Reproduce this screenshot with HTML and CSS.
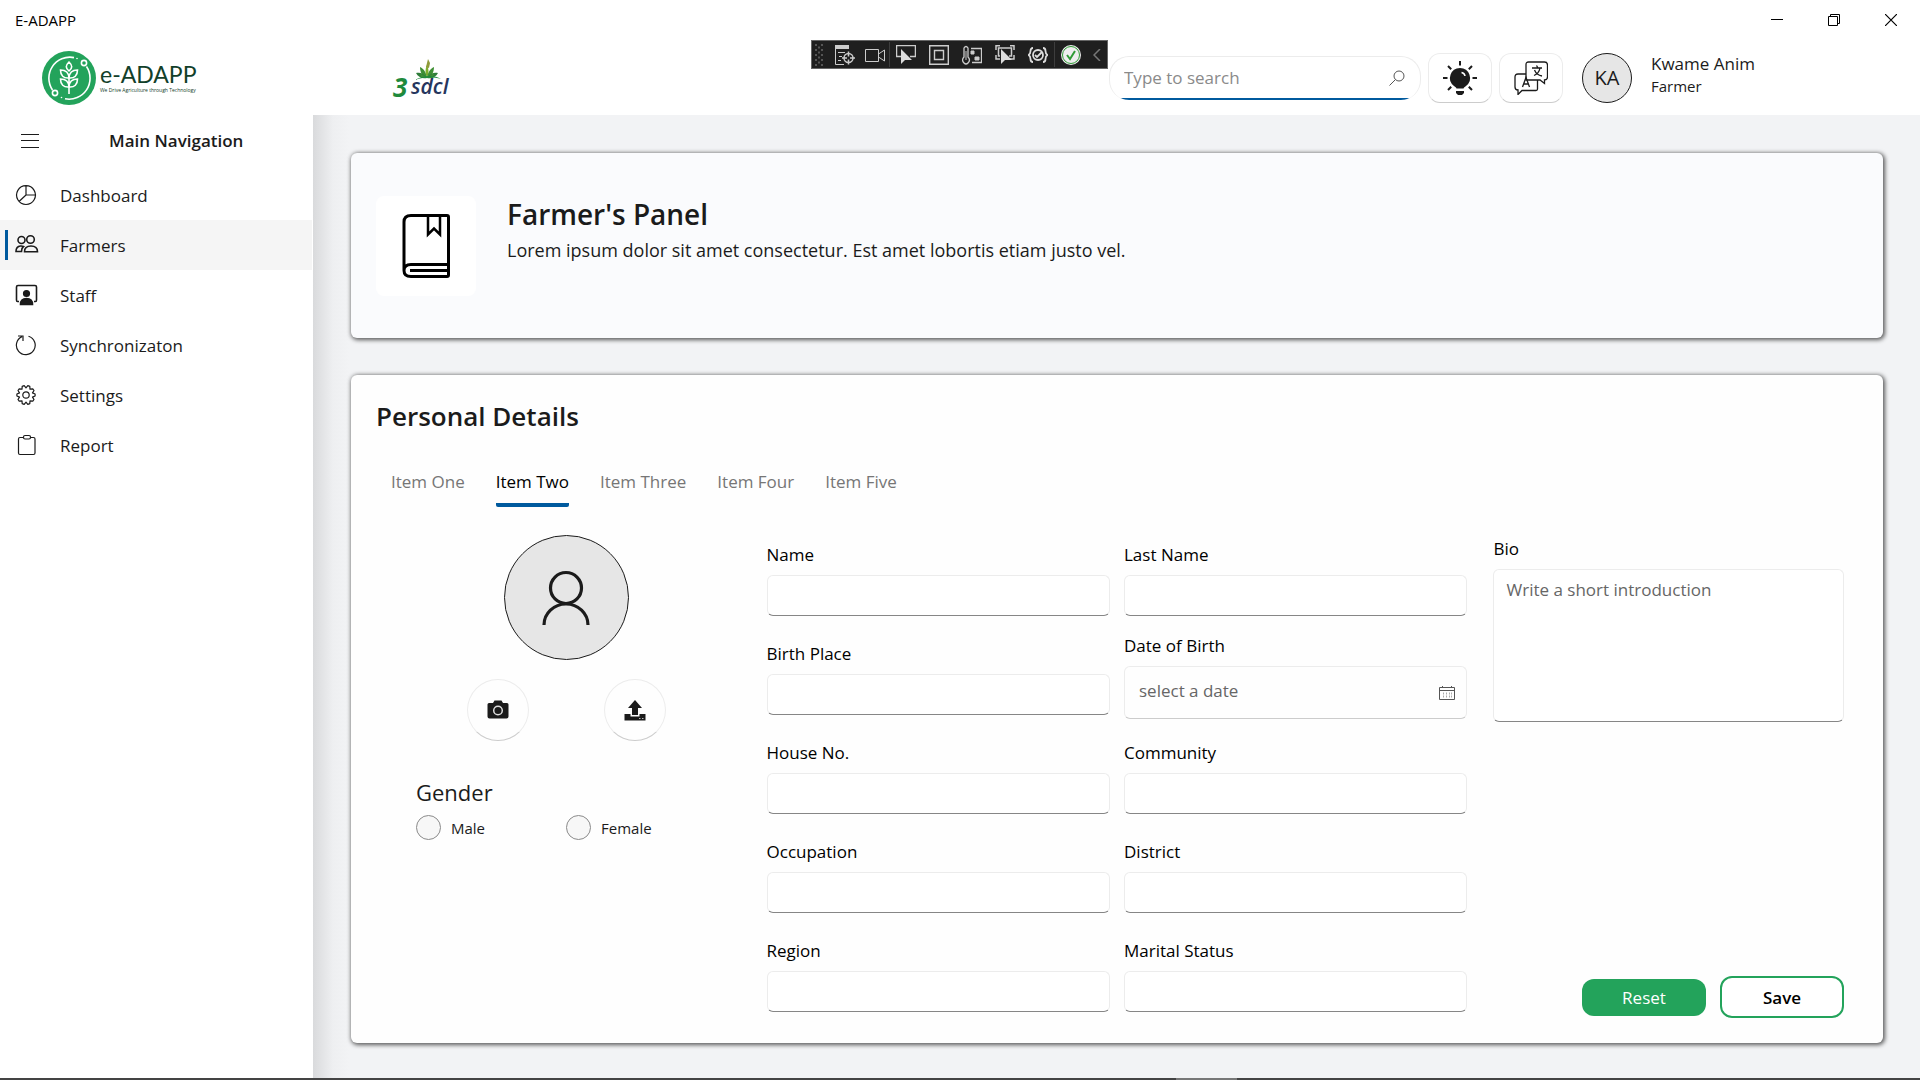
FILE: index.html
```html
<!DOCTYPE html>
<html lang="en">
<head>
<meta charset="utf-8">
<meta name="viewport" content="width=device-width, initial-scale=1">
<title>E-ADAPP</title>
<link rel="stylesheet" href="styles.css">
</head>
<body>
<div class="window">
  <div class="titlebar">
    <span class="titlebar-name">E-ADAPP</span>
    <div class="window-controls">
      <button type="button" class="window-button" aria-label="Minimize"><svg width="12" height="12" viewBox="0 0 12 12"><path d="M0 5.5h12" stroke="#000"/></svg></button>
      <button type="button" class="window-button" aria-label="Restore"><svg width="12" height="12" viewBox="0 0 12 12" fill="none" stroke="#000"><path d="M.5 2.5h9v9h-9zM2.5 2.500V.5h9v9h-2"/></svg></button>
      <button type="button" class="window-button" aria-label="Close"><svg width="12" height="12" viewBox="0 0 12 12"><path d="M0 0l12 12M12 0L0 12" stroke="#000" stroke-width="1.2"/></svg></button>
    </div>
  </div>

  <header class="header">
    <a class="brand" href="#">
      <svg width="54" height="54" viewBox="0 0 54 54" fill="none" stroke="#fff" stroke-width="1.600">
        <circle cx="27" cy="27" r="27" fill="#23a35b" stroke="none"/>
        <path d="M32 6.600A21 21 0 0 0 10.500 39M44.500 15.500A21 21 0 0 1 23 47.800"/>
        <circle cx="42" cy="12" r="2.600"/><circle cx="13" cy="42" r="2.600"/>
        <circle cx="35" cy="7.500" r=".8" fill="#fff" stroke="none"/><circle cx="19.500" cy="46.500" r=".8" fill="#fff" stroke="none"/>
        <path d="M27 43V24M27 20c-3.600-3-3.600-5.500 0-9 3.600 3.500 3.600 6 0 9zM27 27c-.2-5-3.500-8-8.500-8 0 5.500 3 8.500 8.500 8zM27 27c.2-5 3.500-8 8.500-8 0 5.500-3 8.500-8.500 8zM27 36c-.2-5-3.500-8-8.500-8 0 5.500 3 8.500 8.500 8zM27 36c.2-5 3.500-8 8.500-8 0 5.500-3 8.500-8.500 8z"/>
      </svg>
      <span class="brand-text">
        <span class="brand-name">e-ADAPP</span>
        <span class="brand-tagline">We Drive Agriculture through Technology</span>
      </span>
    </a>
    <a class="partner" href="#" aria-label="3sdcl">
      <svg width="72" height="60" viewBox="-6 -8 72 60">
        <g transform="translate(-2 2)">
          <path d="M37 20c-2-5-2-9 0-13 2 4 2 8 0 13z" fill="#7fae2e"/>
          <path d="M37 20c-5-2-7-6-7-11 4 2 6 5 7 11zM37 20c5-2 7-6 7-11-4 2-6 5-7 11z" fill="#3f8f35"/>
          <path d="M37 20c-5 1-9-1-11-5 5-1 8 1 11 5zM37 20c5 1 9-1 11-5-5-1-8 1-11 5z" fill="#2f7d3a"/>
          <path d="M36 9l2-8 2 4-1 5z" fill="#8f9a3a"/>
          <path d="M30 15l7 5 7-5-1 5H31z" fill="#3f8f35"/>
        </g>
        <path d="M23 24c8-5 20-5 26-1-8-2-17-2-26 1z" fill="#1f8a3c"/>
        <text x="1" y="41" class="logo-three">3</text>
        <text x="19" y="38" class="logo-sdcl">sdcl</text>
      </svg>
    </a>

    <div class="header-tools">
      <label class="search">
        <input type="search" placeholder="Type to search" aria-label="Search">
        <svg width="16" height="16" viewBox="0 0 16 16" fill="none" stroke="#555"><circle cx="10" cy="6" r="5"/><path d="M6.500 9.500L.5 15.500"/></svg>
      </label>
      <button type="button" class="tile-button" aria-label="Theme">
        <svg width="34" height="34" viewBox="0 0 34 34" fill="#1b1b1b">
          <path d="M17 7a10 10 0 0 0-6 18c1.500 1 2 1.500 2.500 2.500h7c.5-1 1-1.500 2.500-2.500A10 10 0 0 0 17 7zM13 30h8v2l-2 2h-4l-2-2z"/>
          <path d="M17 0v4.500M0 17h4.500M29.500 17H34M5 5l3.200 3.200M29 5l-3.200 3.200M5 29l3.200-3.200M29 29l-3.200-3.200" stroke="#1b1b1b" stroke-width="2"/>
          <path d="M18.500 11.500q3 .5 3.500 3.500" fill="none" stroke="#fff" stroke-width="1.500"/>
        </svg>
      </button>
      <button type="button" class="tile-button" aria-label="Language">
        <svg width="34" height="34" viewBox="0 0 34 34" fill="none" stroke="#1b1b1b" stroke-width="1.300">
          <path d="M14.500 1h16q3 0 3 3v12q0 3-3 3v3.500L26 19H12V3.500Q12 1 14.500 1z"/>
          <path d="M12 13H4q-3 0-3 3v10q0 3 3 3v4.500L8 29.500h14q1.500 0 1.500-1.500v-9"/>
          <path d="M18 7h10M22.500 4.500L24 7M20 14.500q5-2 6-7.500M20.500 9q2 5 7.500 6"/>
          <path d="M8.500 26l3.500-9.500 3.500 9.500M9.700 23h4.600"/>
        </svg>
      </button>
      <div class="user">
        <span class="user-initials">KA</span>
        <div class="user-text">
          <div class="user-name">Kwame Anim</div>
          <div class="user-role">Farmer</div>
        </div>
      </div>
    </div>
  </header>

  <div class="body">
    <nav class="sidebar" aria-label="Main Navigation">
      <div class="sidebar-head">
        <button type="button" class="menu-button" aria-label="Toggle menu"><svg width="18" height="14" viewBox="0 0 18 14"><path d="M0 .5h18M0 6.500h18M0 13.500h18" stroke="#1b1b1b"/></svg></button>
        <h2 class="sidebar-title">Main Navigation</h2>
      </div>
      <a class="nav-item" href="#"><svg class="nav-icon" viewBox="0 0 24 24"><path d="M11 1.700a9.400 9.400 0 1 0 .01 0zM11 2v9h9.500M11 11l-7 6.500"/></svg>Dashboard</a>
      <a class="nav-item active" href="#" aria-current="page"><svg class="nav-icon strong" viewBox="0 0 24 24"><circle cx="6.500" cy="6" r="3.500"/><circle cx="15.500" cy="5.500" r="3.800"/><path d="M9.500 17.700q0-5.700 6.500-5.700t6.500 5.700zM6.500 17.500H1q0-5 4.500-5.500 1.500-.2 3 .5Q6.500 14 6.500 17.500z"/></svg>Farmers</a>
      <a class="nav-item" href="#"><svg class="nav-icon strong" viewBox="0 0 24 24"><path d="M4 17.500H2.500Q1.500 17.500 1.500 16V3Q1.500 1.500 3 1.500h17q1.500 0 1.500 1.500v13q0 1.500-1 1.500H19"/><circle cx="11.500" cy="9.500" r="2.800" fill="#1b1b1b"/><path d="M5.500 20.500q0-6 6-6t6 6z" fill="#1b1b1b"/></svg>Staff</a>
      <a class="nav-item" href="#"><svg class="nav-icon" viewBox="0 0 24 24"><path d="M13.500 2.200A9.400 9.400 0 1 1 7 2.600M3 2h5v5"/></svg>Synchronizaton</a>
      <a class="nav-item" href="#"><svg class="nav-icon" viewBox="0 0 24 24"><circle cx="11" cy="11" r="3.200"/><path d="M9.200 1.600L11 3.800l1.800-2.200 2 .8.200 2.800 2.800-.3 1.200 1.600-1.500 2.400 2.600 1.100v2l-2.600 1.100 1.500 2.400-1.200 1.600-2.800-.3-.2 2.800-2 .8L11 18.200l-1.800 2.200-2-.8-.2-2.800-2.800.3L3 15.500l1.500-2.400L1.900 12v-2l2.600-1.100L3 6.500l1.200-1.600 2.800.3.200-2.800z" stroke-linejoin="round"/></svg>Settings</a>
      <a class="nav-item" href="#"><svg class="nav-icon" viewBox="0 0 24 24"><path d="M8 3.500H5q-1.500 0-1.500 1.500v14q0 1.500 1.500 1.500h13.500q1.500 0 1.500-1.500V5q0-1.500-1.500-1.500h-3"/><rect x="8.500" y="1.500" width="7" height="3.500" rx="1.500"/></svg>Report</a>
    </nav>

    <main class="content">
      <section class="card banner">
        <div class="banner-tile">
          <svg width="48" height="64" viewBox="0 0 48 64" fill="none" stroke="#000" stroke-width="3">
            <path d="M2 56V8q0-6.500 7-6.500h36q1.500 0 1.500 1.500v47.500H9q-7 0-7 6t7 6h36q1.500 0 1.500-1.500V51M8 56.500h38"/>
            <path d="M26 2v18.500l6-6 6 6V2" stroke-width="2.500"/>
          </svg>
        </div>
        <div class="banner-text">
          <h1 class="heading heading-large">Farmer's Panel</h1>
          <p class="banner-lead">Lorem ipsum dolor sit amet consectetur. Est amet lobortis etiam justo vel.</p>
        </div>
      </section>

      <section class="card details">
        <h2 class="heading">Personal Details</h2>
        <div class="tabs" role="tablist">
          <button type="button" class="tab" role="tab">Item One</button>
          <button type="button" class="tab selected" role="tab" aria-selected="true">Item Two</button>
          <button type="button" class="tab" role="tab">Item Three</button>
          <button type="button" class="tab" role="tab">Item Four</button>
          <button type="button" class="tab" role="tab">Item Five</button>
        </div>
        <form class="form">
          <div class="profile">
            <div class="photo">
              <svg width="50" height="56" viewBox="0 0 50 56" fill="none" stroke="#1b1b1b" stroke-width="3.200"><circle cx="25" cy="18" r="15.500"/><path d="M3 55a22 21 0 0 1 44 0"/></svg>
            </div>
            <div class="photo-actions">
              <button type="button" class="round-button" aria-label="Take photo">
                <svg width="22" height="20" viewBox="0 0 22 20"><path d="M2 3h4l1.500-2.500h7L16 3h4q1.500 0 1.500 1.500v12q0 2-2 2h-17q-2 0-2-2v-12Q.5 3 2 3z" fill="#1b1b1b"/><circle cx="11" cy="10.500" r="4.300" fill="none" stroke="#ddd" stroke-width="1.500"/></svg>
              </button>
              <button type="button" class="round-button" aria-label="Upload photo">
                <svg width="22" height="22" viewBox="0 0 22 22" fill="#1b1b1b"><path d="M11 1l7 8h-4v7H8V9H4zM.5 15H6.500v2.500h9V15h6v6.500H.5z"/><path d="M15 19.500h1.500M18 19.500h1.500" stroke="#bbb"/></svg>
              </button>
            </div>
            <fieldset class="gender">
              <legend>Gender</legend>
              <div class="gender-options">
                <label class="radio"><input type="radio" name="gender">Male</label>
                <label class="radio"><input type="radio" name="gender">Female</label>
              </div>
            </fieldset>
          </div>

          <div class="fields">
            <label class="field">Name<input type="text"></label>
            <label class="field">Last Name<input type="text"></label>
            <label class="field">Birth Place<input type="text"></label>
            <label class="field date-field">Date of Birth
              <span class="date-box">
                <input type="text" placeholder="select a date">
                <svg width="16" height="14" viewBox="0 0 16 14" fill="none" stroke="#555"><path d="M.5 1.500h15v12H.5zM.5 4.500h15M3.500 0v2M12.500 0v2"/><path d="M4.500 6.500v6M7.500 6.500v6M10.500 6.500v6M12.500 6.500v6" stroke="#aaa" stroke-dasharray="2 1"/></svg>
              </span>
            </label>
            <label class="field">House No.<input type="text"></label>
            <label class="field">Community<input type="text"></label>
            <label class="field">Occupation<input type="text"></label>
            <label class="field">District<input type="text"></label>
            <label class="field">Region<input type="text"></label>
            <label class="field">Marital Status<input type="text"></label>
          </div>

          <div class="aside">
            <label class="field">Bio<textarea placeholder="Write a short introduction"></textarea></label>
            <div class="actions">
              <button type="reset" class="button button-reset">Reset</button>
              <button type="submit" class="button button-save">Save</button>
            </div>
          </div>
        </form>
      </section>
    </main>
  </div>
  <footer class="taskbar"><span class="taskbar-active"></span></footer>

  <div class="debug-bar">
    <svg class="grip" width="9" height="22" viewBox="0 0 9 22" stroke="#555" stroke-width="2" stroke-dasharray="2 3"><path d="M1 0v22M7 0v22"/><path d="M4 2.500v19"/></svg>
    <button type="button" class="tool" aria-label="Live visual tree"><svg width="20" height="20" viewBox="0 0 20 20" fill="none" stroke="#ccc"><path d="M0 2h14" stroke-width="4"/><path d="M.5 4v15.500H9M3 7.500h7M4 11.500h3M3 15.500h3"/><circle cx="13.500" cy="13" r="4.500" stroke-width="1.500"/><path d="M13.500 6.500v5M13.500 14.500v5M7 13h5M15 13h5" stroke-width="1.500"/></svg></button>
    <button type="button" class="tool narrow" aria-label="Record"><svg width="20" height="20" viewBox="0 0 20 20" fill="none" stroke="#ccc"><path d="M.5 4.500h13v12H.5zM13.500 9l6-4v11l-6-4"/></svg></button>
    <button type="button" class="tool divided" aria-label="Select element"><svg width="20" height="20" viewBox="0 0 20 20" fill="none" stroke="#ccc"><path d="M5 11.500H.5v-11h19v11H14" stroke-width="1.500"/><path d="M5 4v15l4-4h7z" fill="#ddd" stroke="none"/></svg></button>
    <button type="button" class="tool" aria-label="Display layout"><svg width="20" height="20" viewBox="0 0 20 20" fill="none" stroke="#ccc" stroke-width="1.400"><path d="M.7.700h18.600v18.600H.7zM5.500 5.500h9v9h-9z"/></svg></button>
    <button type="button" class="tool" aria-label="Hot reload"><svg width="20" height="20" viewBox="0 0 20 20" fill="none" stroke="#ccc"><path d="M9 3.500h10.500v14H10M2 3q2-3 4 0v9q3 3 0 6-2 2-4 0-3-3 0-6z" stroke-width="1.300"/><path d="M4 6v9M9 6h3v3H9zM13 12h4v3h-4z" fill="#ccc"/></svg></button>
    <button type="button" class="tool" aria-label="Track focus"><svg width="20" height="20" viewBox="0 0 20 20" fill="none" stroke="#ccc" stroke-width="1.500"><path d="M1 5V.8h4M15 .8h4V5M1 10v4h4M19 10v4h-4M5 11H3.500V3h13v8H14"/><path d="M6 4v15l4-4h7z" fill="#ddd" stroke="none"/></svg></button>
    <button type="button" class="tool" aria-label="Binding failures"><svg width="20" height="20" viewBox="0 0 20 20" fill="none" stroke="#ddd" stroke-width="1.800"><path d="M5 3Q2.500 3 2.500 6t-2 4q2 1 2 4T5 17M15 3q2.500 0 2.500 3t2 4q-2 1-2 4T15 17"/><circle cx="10" cy="10" r="5"/><path d="M7 10l2 2 5-5"/></svg></button>
    <button type="button" class="tool divided" aria-label="Accessibility check"><svg width="20" height="20" viewBox="0 0 20 20" fill="none"><circle cx="10" cy="10" r="10" fill="#eee"/><circle cx="10" cy="10" r="8.500" stroke="#2f9b35"/><path d="M6 10l3 4 5-8" stroke="#2f9b35" stroke-width="2"/></svg></button>
    <button type="button" class="tool collapse" aria-label="Collapse"><svg width="8" height="12" viewBox="0 0 8 12"><path d="M7 0L1 6l6 6" fill="none" stroke="#777" stroke-width="1.500"/></svg></button>
  </div>
</div>
</body>
</html>
```
FILE: styles.css
```css
* { box-sizing: border-box; }

body {
  margin: 0;
  font: 17px/24px "Open Sans", "Noto Sans", sans-serif;
  color: #1b1b1b;
  background: #fff;
}

h1, h2, p { margin: 0; }
button, input, textarea { font: inherit; color: inherit; }
button { padding: 0; border: 0; background: none; }
a { color: inherit; text-decoration: none; }
svg { display: block; flex: none; }

.window {
  position: relative;
  display: flex;
  flex-direction: column;
  min-height: 100vh;
}

.titlebar {
  display: flex;
  justify-content: space-between;
  height: 40px;
  padding: 0 1px 0 15px;
}
.titlebar-name { font-size: 15px; line-height: 40px; color: #000; }
.window-controls { display: flex; }
.window-button { display: grid; place-items: center; width: 57px; }

.header {
  display: flex;
  align-items: center;
  height: 75px;
  padding-left: 42px;
}
.brand { display: flex; align-items: center; gap: 4px; width: 344px; }
.brand-text { display: flex; flex-direction: column; }
.brand-name { font: 23px/24px Lato, sans-serif; color: #12402a; }
.brand-tagline { font-size: 5px; line-height: 8px; color: #12402a; }
.logo-three { font: italic bold 26px "Open Sans", sans-serif; fill: #1f8a3c; }
.logo-sdcl { font: italic 600 21px "Open Sans", sans-serif; fill: #26365e; }

.header-tools { display: flex; align-items: center; gap: 7px; margin-left: auto; }
.search {
  display: flex;
  align-items: center;
  width: 312px;
  height: 44px;
  padding: 0 15px 0 14px;
  border: 1px solid #ececec;
  border-bottom: 0;
  border-radius: 20px;
  background: linear-gradient(#005a9e, #005a9e) bottom / 100% 2px no-repeat;
}
.search input { flex: 1; min-width: 0; padding: 0; border: 0; outline: 0; background: none; }
.search input::placeholder { color: #8a8a8a; opacity: 1; }
.tile-button {
  display: grid;
  place-items: center;
  width: 64px;
  height: 50px;
  border: 1px solid #ececec;
  border-bottom-color: #ccc;
  border-radius: 12px;
}
.user { display: flex; align-items: center; gap: 19px; width: 350px; padding-left: 12px; }
.user-initials {
  display: grid;
  place-items: center;
  width: 50px;
  height: 50px;
  border: 1px solid #1b1b1b;
  border-radius: 50%;
  background: #e6e6e6;
  font-size: 20px;
}
.user-text { padding-bottom: 8px; }
.user-name { line-height: 24px; }
.user-role { font-size: 15px; line-height: 20px; }

.body { display: flex; flex: 1; }

.sidebar { flex: none; width: 313px; }
.sidebar-head { display: flex; align-items: center; height: 55px; padding: 0 21px 4px; }
.sidebar-title { margin-left: 70px; font-size: 17px; line-height: 24px; font-weight: 600; }
.nav-item {
  position: relative;
  display: flex;
  align-items: center;
  gap: 21px;
  height: 50px;
  margin-right: 1px;
  padding: 2px 0 0 15px;
}
.nav-item.active { background: #f5f5f5; }
.nav-item.active::before {
  content: "";
  position: absolute;
  left: 5px;
  top: 10px;
  width: 3px;
  height: 30px;
  background: #005a9e;
}
.nav-icon { width: 24px; height: 24px; fill: none; stroke: #1b1b1b; stroke-width: 1.2; }
.nav-icon.strong { stroke-width: 1.6; }

.content {
  flex: 1;
  min-width: 0;
  display: flex;
  flex-direction: column;
  gap: 37px;
  padding: 38px 37px 35px 38px;
  background: linear-gradient(90deg, #d9dadc, #eeeff1 20px, #f2f3f5 36px);
}
.card {
  border-radius: 6px;
  background: #fefefe;
  box-shadow: 1px 1px 4px 1px #000000a0;
}

.banner { display: flex; padding: 43px 25px 42px; gap: 31px; background: #fafbfd; }
.banner-tile {
  display: grid;
  place-items: center;
  width: 100px;
  height: 100px;
  border-radius: 8px;
  background: #fff;
}
.heading { font-size: 26px; line-height: 36px; font-weight: 600; }
.heading-large { font-size: 28px; }
.banner-lead { font-size: 18px; line-height: 36px; }

.details { flex: 1; padding: 23px 39px 30px 25px; }
.tabs { display: flex; gap: 31px; padding: 36px 15px 0; }
.tab { padding-bottom: 9px; border-bottom: 4px solid transparent; line-height: 24px; color: #767676; }
.tab.selected { color: #000; border-bottom-color: #005a9e; border-radius: 2px; }

.form { display: grid; grid-template-columns: 390fr 700fr 376fr; padding-top: 28px; }

.profile { display: flex; flex-direction: column; align-items: center; padding-right: 10px; }
.photo {
  display: grid;
  place-items: center;
  width: 125px;
  height: 125px;
  border: 1px solid #1b1b1b;
  border-radius: 50%;
  background: #e6e6e6;
}
.photo-actions { display: flex; gap: 75px; margin-top: 19px; }
.round-button {
  display: grid;
  place-items: center;
  width: 62px;
  height: 62px;
  border: 1px solid #ececec;
  border-bottom-color: #ccc;
  border-radius: 50%;
}
.gender { align-self: stretch; margin: 35px 0 0 40px; padding: 0; border: 0; }
.gender legend { padding: 0; font-size: 22px; line-height: 32px; }
.gender-options { display: grid; grid-template-columns: 150px 150px; padding-top: 7px; }
.radio { display: flex; align-items: center; gap: 10px; font-size: 15px; }
.radio input {
  appearance: none;
  width: 25px;
  height: 25px;
  margin: 0;
  border: 1px solid #8a8a8a;
  border-radius: 50%;
  background: #f7f7f7;
}

.fields {
  display: grid;
  grid-template-columns: 1fr 1fr;
  grid-auto-rows: 73px;
  gap: 26px 14px;
  padding-top: 8px;
}
.field { display: flex; flex-direction: column; gap: 8px; min-width: 0; color: #000; }
.field > input, .field > textarea {
  width: 100%;
  height: 41px;
  padding: 8px 12px;
  border: 1px solid #ececec;
  border-bottom-color: #868686;
  border-radius: 6px;
  outline: 0;
  background: #fff;
}
.field > textarea { display: block; height: 153px; resize: none; }
.field ::placeholder { color: #666; opacity: 1; }
.date-field { align-self: center; padding-bottom: 4px; }
.date-box {
  display: flex;
  align-items: center;
  height: 53px;
  padding: 0 11px 0 14px;
  border: 1px solid #ececec;
  border-bottom-color: #ccc;
  border-radius: 6px;
}
.date-box input { flex: 1; min-width: 0; padding: 0 0 4px; border: 0; outline: 0; background: none; }

.aside { display: flex; flex-direction: column; justify-content: space-between; padding: 2px 0 0 26px; }
.actions { display: flex; justify-content: flex-end; align-items: center; gap: 14px; margin-bottom: -6px; }
.button { width: 124px; padding-top: 2px; border-radius: 12px; }
.button-reset { height: 37px; background: #23a35b; color: #fff; }
.button-save { height: 42px; border: 2px solid #23a35b; background: #fff; color: #000; font-weight: 600; }

.taskbar { height: 2px; padding-left: 1176px; background: #444; }
.taskbar-active { display: block; width: 61px; height: 2px; background: #777; }

/* Debugger strip floating over the window */
.debug-bar {
  position: absolute;
  top: 40px;
  left: 811px;
  display: flex;
  align-items: center;
  width: 297px;
  height: 29px;
  border: 1px solid #666;
  background: #1f1f1f;
}
.grip { margin: 0 4px 0 3px; }
.tool { display: grid; place-items: center; width: 33px; height: 25px; }
.tool.narrow { width: 28px; }
.tool.divided { border-left: 1px solid #3d3d3d; }
.tool.collapse { width: 20px; }
```
